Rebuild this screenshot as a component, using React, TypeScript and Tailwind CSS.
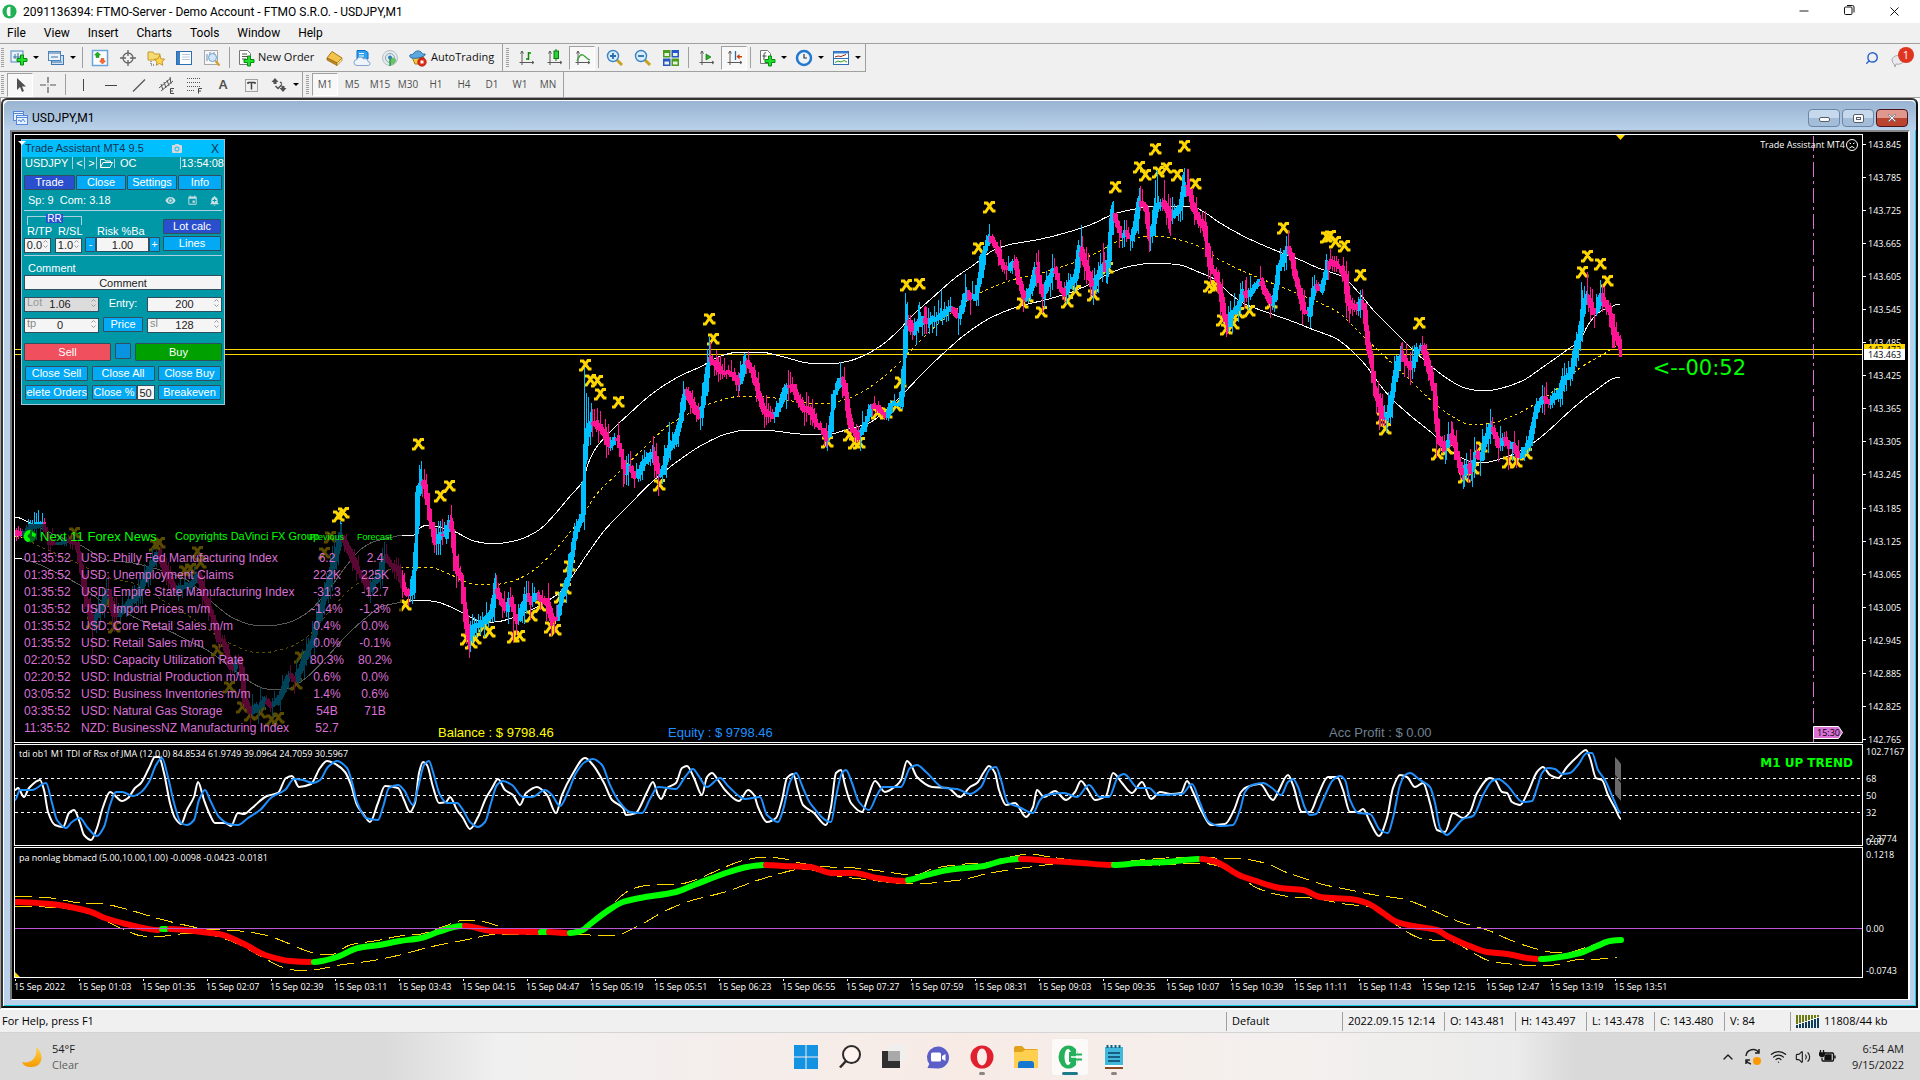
import type { ReactNode } from 'react';
import { FaXmark } from 'react-icons/fa6';
import { Search, ChevronUp, Wifi, Volume2, X, Minus } from 'lucide-react';
import { MdRemoveRedEye, MdAddAlert, MdEvent, MdPhotoCamera } from 'react-icons/md';

type Point = [number, number];

const parse = (data: string): Point[] =>
  data
    .trim()
    .split(/\s+/)
    .map((pair) => pair.split(',').map(Number) as Point);

// Price path of the main chart, one turning point per pair
const PRICE = parse(`
15,533 22,534 30,526 36,525 43,524 48,541 55,544 68,540 76,543 80,565 86,600 92,623 97,612 108,590 112,612 118,615
125,605 135,597 142,585 150,565 158,553 165,570 175,590 183,587 193,582 198,575 204,597 212,617 218,640 223,640
230,668 234,668 238,658 241,672 244,700 250,712 258,706 265,700 270,705 275,703 280,695 288,675 295,680 302,662
312,640 320,610 327,585 335,555 341,535 348,550 360,575 370,590 378,575 384,555 388,562 398,570 404,590 408,593
412,591 415,553 417,495 421,478 425,488 429,519 435,541 441,533 444,536 449,521 451,526 455,567 461,578 464,612
468,638 474,626 484,621 491,612 495,586 500,600 506,610 510,598 514,615 517,621 522,607 526,593 531,602 536,593
541,600 546,600 551,619 557,619 561,595 567,581 571,553 575,533 582,512 584,457 586,433 590,423 596,424 604,433
608,445 612,444 616,436 620,450 624,471 629,467 635,478 641,466 649,455 653,454 658,473 662,471 667,450 674,440
681,416 684,390 688,395 695,411 700,416 704,392 708,359 714,362 720,371 730,373 739,383 745,359 750,368 755,381
761,405 767,414 773,416 780,402 786,385 791,385 796,395 802,407 810,410 816,424 822,430 827,438 830,430 833,395
840,378 844,385 849,423 855,433 859,436 865,423 871,405 877,407 886,416 890,405 900,403 903,371 905,330 907,318
912,331 918,323 923,318 927,321 933,318 939,317 945,311 951,308 958,318 963,302 966,292 971,299 975,295 980,275
984,250 988,237 993,242 998,252 1002,266 1008,268 1014,260 1018,280 1024,298 1031,287 1036,265 1040,287 1042,297
1046,283 1054,268 1059,287 1065,293 1070,282 1075,277 1079,247 1084,260 1088,273 1092,287 1096,278 1102,265
1105,268 1108,260 1111,220 1113,212 1116,223 1120,235 1125,232 1130,238 1134,227 1139,200 1145,208 1149,235
1152,233 1155,207 1160,202 1165,205 1171,218 1176,210 1180,205 1183,187 1186,182 1189,193 1193,207 1198,220
1204,227 1207,253 1210,268 1216,275 1220,293 1224,317 1228,323 1231,313 1237,307 1243,290 1248,295 1253,288
1260,280 1265,293 1270,303 1274,297 1278,270 1284,253 1287,247 1291,257 1295,277 1300,297 1304,312 1308,313
1311,297 1314,285 1320,290 1324,277 1327,262 1331,262 1339,267 1345,277 1347,300 1352,307 1357,307 1361,300
1364,310 1367,343 1371,363 1374,390 1379,403 1383,418 1388,413 1392,390 1396,367 1400,353 1404,360 1412,367
1417,350 1422,347 1427,363 1433,387 1436,420 1438,440 1445,447 1450,432 1455,447 1458,463 1462,473 1467,465
1471,470 1475,453 1480,458 1484,440 1491,425 1496,440 1499,445 1504,437 1509,448 1513,443 1518,458 1524,448
1529,442 1534,417 1538,402 1543,397 1548,402 1553,397 1558,395 1563,378 1569,375 1575,350 1580,330 1583,303
1587,295 1591,307 1594,313 1597,308 1600,293 1604,303 1609,310 1612,330 1618,340 1621,355
`);

// Long wicks: x, tip
const SPIKES = parse(`
92,665 108,575 341,523 384,543 421,461 419,465 451,505 469,658 495,573 513,642 551,636 584,368 586,393 588,397
591,403 597,408 605,419 608,455 618,422 623,487 653,436 658,496 669,422 683,381 707,349 709,337 717,357 724,358
731,360 739,391 745,354 827,451 840,362 860,440 905,293 907,302 919,302 925,306 929,334 941,290 958,335 965,274
989,224 979,256 1023,312 1036,253 1042,313 1081,225 1093,305 1103,243 1107,284 1111,205 1113,201 1119,248
1130,251 1139,188 1142,189 1149,252 1155,180 1157,170 1164,180 1169,233 1183,172 1187,169 1205,211 1227,334
1229,320 1245,280 1260,266 1270,318 1280,248 1286,236 1302,325 1308,322 1343,257 1349,323 1360,290 1379,430
1384,426 1401,343 1412,378 1422,336 1436,458 1445,464 1451,421 1463,489 1471,481 1480,476 1482,429 1491,421
1508,470 1516,467 1542,385 1559,386 1581,282 1584,286 1587,272 1590,287 1600,280 1602,285 1613,348 1621,357
`);

const UPPER = parse(`
15,517 30,523 60,537 80,545 107,560 133,563 160,570 187,580 213,603 233,618 253,625 267,626 287,623 307,613 327,592
347,565 360,550 373,542 393,537 402,535 414,535 420,528 427,525 453,531 474,541 493,544 518,540 539,530 555,514
571,495 583,481 588,464 596,448 612,430 629,414 653,393 678,377 702,366 718,357 739,352 759,352 784,357 808,363
829,364 849,361 865,355 882,345 898,331 914,314 931,299 955,278 975,264 992,251 1008,245 1041,239 1065,233 1090,225
1114,214 1135,209 1155,206 1190,206 1204,212 1220,223 1245,237 1265,246 1282,253 1298,259 1318,268 1343,277 1359,293
1375,312 1400,337 1424,360 1445,377 1465,388 1484,391 1502,388 1522,381 1543,367 1567,350 1580,340 1588,325 1598,313
1608,308 1620,304
`);
const MIDDLE = parse(`
15,536 43,548 77,563 110,578 133,583 167,603 200,623 227,642 260,653 287,648 307,637 333,607 353,587 380,572 407,567
428,567 449,574 473,584 490,585 510,582 531,572 555,550 580,519 596,495 620,471 645,447 669,425 694,411 718,401 743,396
767,397 792,401 824,404 849,398 873,385 898,364 918,343 939,323 963,304 984,291 1012,280 1041,273 1073,263 1098,252
1122,240 1155,236 1180,240 1200,247 1220,260 1245,272 1269,282 1294,292 1318,302 1339,313 1359,332 1380,352 1408,378
1433,402 1453,417 1469,424 1486,424 1510,417 1535,404 1559,387 1580,368 1604,354 1618,346
`);
const LOWER = parse(`
15,558 33,562 53,571 83,587 100,600 120,610 140,620 167,630 187,640 207,650 230,667 247,680 267,689 287,689 307,677
327,657 347,635 367,617 383,606 404,602 420,600 437,602 453,608 465,614 482,622 494,622 518,616 535,608 559,593
571,578 588,553 604,531 629,505 653,481 678,461 702,445 726,434 747,430 775,431 800,434 829,434 849,429 869,423
890,407 902,395 922,374 947,350 967,333 992,317 1020,306 1045,300 1069,293 1090,284 1110,273 1131,266 1155,263
1180,265 1196,271 1216,280 1229,293 1245,304 1269,313 1294,322 1314,330 1335,338 1351,350 1367,367 1380,385 1392,399
1412,417 1433,434 1449,450 1469,461 1482,463 1506,457 1526,448 1547,432 1571,410 1592,393 1620,377
`);

const MARKS = parse(`
74,533 155,545 159,543 197,552 200,563 184,571 190,569 107,603 92,622 114,627 217,650 229,687 242,707 250,715 260,713
271,720 278,718 296,684 300,657 330,537 324,553 338,516 343,513 405,605 418,444 440,496 449,486 466,639 471,643
475,639 484,626 489,632 513,637 519,636 531,616 540,606 550,627 555,630 560,597 565,589 569,566 585,365 590,380
597,381 600,394 618,402 659,485 709,319 713,339 827,442 849,435 854,443 859,443 877,413 886,413 896,406 900,382
906,285 919,284 978,248 989,207 1022,303 1027,297 1041,312 1067,302 1075,291 1093,295 1107,268 1115,187 1139,167
1145,175 1155,149 1158,172 1166,168 1177,175 1184,146 1195,184 1209,286 1214,287 1222,320 1226,329 1233,324
1238,313 1249,311 1271,303 1283,228 1326,237 1330,236 1335,242 1344,246 1360,275 1382,418 1385,429 1419,323
1437,454 1447,449 1464,477 1473,469 1481,447 1508,462 1516,462 1526,454 1582,272 1587,256 1600,264 1607,281
`);

const TDI_FAST = parse(`
15,790 18,788 24,797 29,788 40,780 44,790 48,812 55,825 63,827 69,813 74,810 80,823 84,835 91,840 97,828 103,807
110,792 122,801 128,798 135,788 141,783 149,768 155,757 159,757 164,773 170,803 175,818 181,824 187,810 194,797
198,782 204,800 210,815 215,823 225,823 231,826 238,813 244,814 252,808 267,796 278,793 286,778 292,776 299,787
311,784 320,768 327,761 337,765 345,772 351,785 357,805 364,815 370,822 378,803 385,786 398,788 404,800 410,812
415,803 419,773 423,762 427,765 433,787 439,803 446,802 450,797 457,810 463,818 470,829 478,817 486,798 492,788
498,779 505,790 513,795 520,805 526,793 537,787 547,795 556,813 562,795 572,775 585,758 593,765 604,783 612,800
623,808 626,815 636,813 640,807 647,792 653,782 658,795 661,799 667,788 676,783 682,768 687,766 694,778 702,795
707,777 712,773 718,780 725,790 739,801 748,790 754,795 758,807 767,822 776,818 782,800 787,778 793,774 798,790
803,805 814,813 826,825 831,807 836,773 841,770 845,785 851,803 862,812 868,797 875,781 885,792 897,785 901,780
907,761 911,765 917,777 932,787 948,788 960,797 970,787 977,783 984,772 989,766 995,773 999,790 1006,805 1015,803
1026,817 1033,807 1037,790 1044,797 1055,791 1066,800 1075,792 1081,781 1088,790 1095,800 1106,796 1113,773
1122,783 1132,793 1142,782 1151,799 1160,792 1171,794 1181,793 1187,781 1193,792 1202,812 1211,825 1225,824
1234,810 1241,792 1247,787 1260,784 1273,800 1278,792 1288,775 1293,785 1302,812 1310,812 1318,795 1328,777
1337,777 1343,790 1350,812 1358,812 1363,809 1370,822 1379,836 1387,818 1393,788 1400,775 1407,777 1415,787
1423,783 1430,803 1437,830 1445,832 1453,813 1463,818 1470,812 1477,793 1490,778 1495,780 1502,792 1507,793
1512,802 1520,805 1528,792 1537,772 1543,767 1550,775 1558,778 1567,767 1577,757 1586,750 1590,758 1596,778
1602,780 1608,795 1615,808 1621,819
`);
const TDI_SLOW = parse(`
15,800 20,790 32,790 46,783 52,803 57,820 66,828 72,822 80,818 87,827 97,836 104,827 110,805 116,792 122,792 133,796
140,793 149,782 156,765 162,758 168,777 174,803 181,823 187,825 194,820 199,800 205,790 210,800 219,817 229,824
238,825 248,818 260,810 272,797 285,790 294,779 303,780 313,783 320,780 328,767 337,761 347,768 352,782 357,802
366,818 378,820 383,807 389,788 398,785 404,790 413,805 418,788 424,765 429,761 433,772 440,795 447,803 457,803
463,810 470,822 478,827 485,822 491,803 497,785 503,781 512,785 523,797 532,797 545,790 552,795 560,806 568,792
576,773 585,762 593,759 602,765 610,785 618,800 630,812 642,813 650,799 658,787 676,789 685,777 693,769 698,775
707,787 720,778 729,787 745,799 760,797 767,815 778,822 783,810 790,782 796,773 803,788 810,803 831,822 836,797
842,773 846,770 852,783 859,802 869,810 877,795 883,787 901,787 910,768 917,765 926,772 944,788 957,789 970,794
981,787 990,769 996,767 1001,780 1008,803 1019,807 1033,813 1040,800 1046,795 1064,793 1077,797 1089,785 1100,797
1109,797 1118,777 1124,774 1138,788 1149,788 1158,795 1182,794 1192,784 1200,803 1209,822 1220,826 1233,825
1240,810 1245,792 1252,785 1263,783 1272,788 1281,795 1288,782 1293,779 1298,787 1305,808 1310,815 1316,814
1323,800 1333,780 1340,776 1345,780 1350,800 1358,813 1370,814 1380,830 1388,833 1393,818 1400,785 1405,775
1410,773 1420,780 1430,787 1435,803 1440,828 1447,835 1453,830 1463,819 1473,816 1483,795 1492,781 1498,779
1507,785 1523,802 1532,801 1537,788 1542,773 1548,768 1555,769 1562,774 1570,773 1578,765 1587,753 1592,753
1598,770 1605,780 1613,798 1621,813
`);

const MACD: { up: boolean; data: string }[] = [
  { up: false, data: '15,902 51,904 88,911 105,918 126,924 143,928 158,930' },
  { up: true, data: '162,929 166,929' },
  { up: false, data: '170,929 202,932 219,934 244,944 265,955 290,961 310,962' },
  { up: true, data: '314,962 322,961 337,957 358,948 379,945 400,941 421,938 438,932 461,926' },
  { up: false, data: '465,926 492,931 537,932' },
  { up: true, data: '541,932 546,932' },
  { up: false, data: '549,932 566,933' },
  { up: true, data: '570,933 583,930 589,925 606,912 623,902 640,898 676,892 694,885 729,872 747,867 763,865' },
  { up: false, data: '766,865 783,866 810,867 832,873 854,873 877,878 904,881' },
  { up: true, data: '908,880 926,875 948,870 984,866 1002,861 1018,859' },
  { up: false, data: '1021,859 1051,861 1082,863 1110,865' },
  { up: true, data: '1114,865 1140,863 1167,862 1198,859' },
  {
    up: false,
    data: '1202,859 1216,862 1241,876 1253,880 1280,888 1303,890 1320,897 1333,898 1350,899 1367,903 1383,913 1397,922 1413,926 1437,930 1447,936 1467,945 1487,952 1507,954 1527,958 1537,959',
  },
  { up: true, data: '1541,959 1553,958 1580,953 1597,946 1610,941 1621,940' },
];
const MACD_UPPER = parse(`
15,896 51,898 80,903 103,904 126,909 143,914 160,919 180,924 206,929 240,931 265,935 290,944 310,952 330,955 350,945
380,940 400,936 421,934 445,926 465,920 485,922 505,928 540,932 570,932 590,924 606,912 620,897 632,889 650,885
680,884 700,878 725,867 745,860 765,857 785,859 800,863 830,867 855,868 880,871 915,875 935,868 965,864 990,862
1010,857 1030,854 1050,857 1080,861 1110,863 1140,860 1190,857 1215,858 1243,859 1268,864 1283,871 1303,878
1325,885 1350,890 1375,895 1403,899 1423,906 1443,915 1460,922 1490,931 1510,940 1530,947 1550,952 1565,953
1590,946 1608,940 1621,938
`);
const MACD_LOWER = parse(`
15,906 60,908 90,914 110,923 125,930 143,936 165,936 190,933 215,936 240,945 262,957 285,968 303,971 320,969 340,965
370,961 400,955 430,947 465,940 500,934 540,934 590,935 615,935 640,925 665,911 690,901 725,892 765,878 805,869
830,875 870,880 910,884 960,880 990,873 1030,867 1070,863 1110,866 1160,865 1200,863 1235,872 1255,887 1275,894
1293,897 1310,898 1345,904 1370,907 1390,920 1405,931 1423,939 1453,942 1470,951 1490,961 1510,964 1543,966
1560,964 1575,960 1600,959 1617,957
`);

// Cubic through every point, flat at the turning points so that no peak overshoots
function curve(points: Point[]) {
  const slopes = points.map((p, i) => {
    if (i === 0 || i === points.length - 1) return 0;
    const a = (p[1] - points[i - 1][1]) / (p[0] - points[i - 1][0]);
    const b = (points[i + 1][1] - p[1]) / (points[i + 1][0] - p[0]);
    return a * b <= 0 ? 0 : (2 * a * b) / (a + b);
  });
  let d = `M${points[0][0]} ${points[0][1]}`;
  for (let i = 1; i < points.length; i++) {
    const [x0, y0] = points[i - 1];
    const [x1, y1] = points[i];
    const h = (x1 - x0) / 3;
    d += `C${(x0 + h).toFixed(1)} ${(y0 + slopes[i - 1] * h).toFixed(1)} ${(x1 - h).toFixed(1)} ${(y1 - slopes[i] * h).toFixed(1)} ${x1} ${y1}`;
  }
  return d;
}

function valueAt(points: Point[], x: number) {
  const i = points.findIndex((p) => p[0] >= x);
  if (i <= 0) return points[i === 0 ? 0 : points.length - 1][1];
  const [x0, y0] = points[i - 1];
  const [x1, y1] = points[i];
  return y0 + ((y1 - y0) * (x - x0)) / (x1 - x0);
}

const noise = (n: number) => {
  const v = Math.sin(n * 12.9898) * 43758.5453;
  return v - Math.floor(v);
};

function buildCandles() {
  const out = { upBody: '', upWick: '', downBody: '', downWick: '' };
  for (let x = 16; x <= 1621; x += 2) {
    const before = valueAt(PRICE, x - 2);
    const after = valueAt(PRICE, x + 1);
    const up = valueAt(PRICE, x + 1) < valueAt(PRICE, x - 1);
    const top = Math.round(Math.min(before, after) - noise(x) * 3);
    const bottom = Math.round(Math.max(before, after) + 1 + noise(x + 7) * 3);
    const high = Math.round(top - Math.pow(noise(x + 3), 2) * 15);
    const low = Math.round(bottom + Math.pow(noise(x + 5), 2) * 15);
    const body = `M${x + 0.5} ${top}V${bottom}`;
    const wick = `M${x + 0.5} ${high}V${low}`;
    if (up) {
      out.upBody += body;
      out.upWick += wick;
    } else {
      out.downBody += body;
      out.downWick += wick;
    }
  }
  SPIKES.forEach(([x, tip]) => {
    const wick = `M${x + 0.5} ${tip}V${Math.round(valueAt(PRICE, x))}`;
    if (valueAt(PRICE, x + 2) < valueAt(PRICE, x - 2) || tip < valueAt(PRICE, x) - 25) out.upWick += wick;
    else out.downWick += wick;
  });
  return out;
}

const candles = buildCandles();

const PRICES = Array.from({ length: 19 }, (_, i) => (143.845 - i * 0.06).toFixed(3));
const TIMES = [
  '2022', '01:03', '01:35', '02:07', '02:39', '03:11', '03:43', '04:15', '04:47', '05:19', '05:51', '06:23', '06:55',
  '07:27', '07:59', '08:31', '09:03', '09:35', '10:07', '10:39', '11:11', '11:43', '12:15', '12:47', '13:19', '13:51',
];

const NEWS = [
  ['01:35:52', 'USD: Philly Fed Manufacturing Index', '6.2', '2.4'],
  ['01:35:52', 'USD: Unemployment Claims', '222K', '225K'],
  ['01:35:52', 'USD: Empire State Manufacturing Index', '-31.3', '-12.7'],
  ['01:35:52', 'USD: Import Prices m/m', '-1.4%', '-1.3%'],
  ['01:35:52', 'USD: Core Retail Sales m/m', '0.4%', '0.0%'],
  ['01:35:52', 'USD: Retail Sales m/m', '0.0%', '-0.1%'],
  ['02:20:52', 'USD: Capacity Utilization Rate', '80.3%', '80.2%'],
  ['02:20:52', 'USD: Industrial Production m/m', '0.6%', '0.0%'],
  ['03:05:52', 'USD: Business Inventories m/m', '1.4%', '0.6%'],
  ['03:35:52', 'USD: Natural Gas Storage', '54B', '71B'],
  ['11:35:52', 'NZD: BusinessNZ Manufacturing Index', '52.7', ''],
];

/* ---------- toolbar ---------- */

type IconProps = { children: ReactNode; size?: number };

function Icon({ children, size = 18 }: IconProps) {
  return (
    <svg width={size} height={size} viewBox="0 0 18 18" fill="none" className="shrink-0">
      {children}
    </svg>
  );
}

function Plus({ x = 10, y = 10 }: { x?: number; y?: number }) {
  return (
    <path
      d={`M${x - 1.5} ${y - 5}h3v3.500h3.500v3h-3.500v3.500h-3v-3.500h-3.500v-3h3.500z`}
      fill="#1fe02a"
      stroke="#0a8a10"
      strokeWidth="1"
    />
  );
}

function Tool({ label, pressed, children }: { label: string; pressed?: boolean; children: ReactNode }) {
  return (
    <button aria-label={label} className="flex w-7 items-center justify-center">
      <span
        className={
          pressed
            ? 'flex h-6 w-[26px] items-center justify-center border border-t-[#a0a0a0] border-l-[#a0a0a0] border-r-white border-b-white bg-[#f8f8f8]'
            : 'flex h-6 w-[26px] items-center justify-center'
        }
      >
        {children}
      </span>
    </button>
  );
}

function SplitTool({ label, children }: { label: string; children: ReactNode }) {
  return (
    <button aria-label={label} className="flex w-[37px] items-center">
      <span className="flex w-7 justify-center">{children}</span>
      <span className="h-0 w-0 border-x-[3px] border-t-[3px] border-x-transparent border-t-black" />
    </button>
  );
}

const Separator = () => (
  <div className="flex w-[7px] justify-center">
    <div className="h-[21px] w-px self-center bg-[#a0a0a0]" />
  </div>
);
const NarrowSeparator = () => (
  <div className="flex w-[5px] justify-center">
    <div className="h-[21px] w-px self-center bg-[#a0a0a0]" />
  </div>
);
const Grip = () => (
  <div className="mx-px h-5 w-[3px] self-center bg-[repeating-linear-gradient(to_bottom,#a0a0a0_0_1px,#f0f0f0_1px_2px)]" />
);

const axes = <path d="M5 2v14M2.5 13.5H17M3.5 4.5L5 2l1.5 2.5M15 12l2 1.5-2 1.5" stroke="#5a5a5a" />;

function MainToolbar() {
  return (
    <div className="flex h-7 w-[866px] items-stretch border-r border-b border-[#a0a0a0] text-[#111]">
      <Grip />
      <SplitTool label="New chart">
        <Icon>
          <rect x="1" y="2" width="12" height="11" fill="#eaf3fc" stroke="#4d86bd" />
          <path d="M3 8h7M5 5v5M8 4v6" stroke="#3c6ea0" />
          <Plus x={12} y={11} />
        </Icon>
      </SplitTool>
      <SplitTool label="Profiles">
        <Icon>
          <rect x="4.5" y="6.5" width="12" height="9" fill="#cfe2f5" stroke="#3f78b2" />
          <rect x="1.5" y="2.5" width="12" height="9" fill="#eaf3fc" stroke="#4d86bd" />
          <path d="M1.5 4h12M4 8h7M5 13h10" stroke="#3c6ea0" />
        </Icon>
      </SplitTool>
      <Separator />
      <Tool label="Market watch">
        <Icon>
          <rect x="1.5" y="1.5" width="15" height="15" fill="#fff" stroke="#6aa5dd" strokeWidth="1.5" />
          <path d="M6.5 3l3 3h-1.500v2.500h-3V6h-1.500z" fill="#1db31d" stroke="#0d7d0d" strokeWidth=".5" />
          <path d="M11.500 15l-3-3h1.500V9.500h3V12h1.500z" fill="#ff6a30" stroke="#c23a08" strokeWidth=".5" />
        </Icon>
      </Tool>
      <Tool label="Data window">
        <Icon>
          <circle cx="9" cy="9" r="5" stroke="#666" strokeWidth="1.3" />
          <path d="M9 1v6M9 11v6M1 9h6M11 9h6" stroke="#666" strokeWidth="1.300" />
        </Icon>
      </Tool>
      <Tool label="Navigator">
        <Icon>
          <path d="M1 3h5l1.500 2H13v6H1z" fill="#f6dc70" stroke="#c0982e" />
          <path d="M4 12v4h4" stroke="#444" strokeDasharray="1 1" />
          <path d="M12.500 6.500l1.600 3.300 3.600.4-2.700 2.500.8 3.600-3.300-1.900-3.200 1.900.7-3.600-2.600-2.500 3.600-.4z" fill="#ffd84a" stroke="#b8821a" strokeWidth=".8" />
        </Icon>
      </Tool>
      <Tool label="Terminal">
        <Icon>
          <rect x="1.500" y="2.500" width="15" height="13" fill="#fff" stroke="#2c6eb5" />
          <path d="M2 3h3v12H2z" fill="#3f7fc4" />
          <path d="M7 5.500h8M7 8h8M7 10.500h8" stroke="#b8c8dc" />
        </Icon>
      </Tool>
      <Tool label="Strategy tester">
        <Icon>
          <rect x="1.500" y="1.500" width="13" height="14" fill="#f6f6f6" stroke="#a8a8a8" />
          <path d="M4 12V5M7 8V3M11 6V3" stroke="#6d8fb4" />
          <circle cx="9.500" cy="8.500" r="4" fill="#cfe6fa" stroke="#6f9fce" />
          <path d="M12.500 12l4 4.500" stroke="#d49c2a" strokeWidth="2.200" />
        </Icon>
      </Tool>
      <Separator />
      <button className="flex w-[87px] items-center">
        <span className="flex w-[25px] justify-center">
          <Icon>
            <path d="M2.500 1.500h8l3 3v11h-11z" fill="#fff" stroke="#777" />
            <path d="M5 5h5M5 7.500h6M5 10h4" stroke="#555" />
            <Plus x={12} y={12} />
          </Icon>
        </span>
        <span className="whitespace-nowrap">New Order</span>
      </button>
      <Tool label="MetaEditor">
        <Icon>
          <path d="M2 9l5-6.500 10 6.500-5 5z" fill="#f3c44c" stroke="#a97614" />
          <path d="M2 9l10 5v2.500L2 11z" fill="#c98d1b" stroke="#8d5f0c" strokeWidth=".7" />
          <path d="M12 14l5-5v2.500l-5 5z" fill="#ffe9a0" stroke="#a97614" strokeWidth=".7" />
        </Icon>
      </Tool>
      <Tool label="Virtual hosting">
        <Icon>
          <path d="M4 1.500h8l3 2V10H4z" fill="#2fa3f2" stroke="#0d6bbd" />
          <path d="M6 4.500h5M6 7h5" stroke="#fff" />
          <path d="M4 16.500a3 3 0 010-6 3.500 3.500 0 016.500-.5 3 3 0 014.500 2.500 2 2 0 010 4z" fill="#eef4fb" stroke="#86a6cb" />
        </Icon>
      </Tool>
      <Tool label="Signals">
        <Icon>
          <circle cx="9" cy="9" r="7.500" fill="#e4ebee" stroke="#b4bfc6" />
          <circle cx="9" cy="9" r="4.500" stroke="#8aa4b4" />
          <path d="M9 9c3-1 5 0 6.500 2-1 3-3 5-6.500 5.500z" fill="#6cc070" />
          <circle cx="9" cy="8.500" r="2" fill="#2f7fb7" />
          <path d="M9 9v8" stroke="#2d9a3a" strokeWidth="1.500" />
        </Icon>
      </Tool>
      <button className="flex w-[97px] items-center">
        <span className="flex w-[27px] justify-center">
          <Icon>
            <path d="M3 8h12l-3 7H6z" fill="#f1c842" stroke="#a67c10" />
            <path d="M1 6c2-1 3 0 4-2s5-3 7-1 1 2 4 2c1 0 0 3-7 4S0 8 1 6z" fill="#5ba9de" stroke="#2a6da5" />
            <circle cx="13" cy="13" r="4.300" fill="#dd2a1b" stroke="#a81206" strokeWidth=".6" />
            <path d="M11.500 11.500h3v3h-3z" fill="#fff" />
          </Icon>
        </span>
        <span>AutoTrading</span>
      </button>
      <div className="mx-px w-px bg-[#a0a0a0]" />
      <div className="flex pr-[2px] pl-px">
        <Grip />
      </div>
      <Tool label="Bar chart">
        <Icon>
          {axes}
          <path d="M11.500 3v8M11.500 4H14M11.500 10H9" stroke="#0d8a0d" strokeWidth="1.500" />
        </Icon>
      </Tool>
      <Tool label="Candlesticks">
        <Icon>
          {axes}
          <path d="M11 0v12" stroke="#0b7a0b" />
          <rect x="9" y="2" width="4.500" height="7.500" fill="#25d23c" stroke="#0b7a0b" />
        </Icon>
      </Tool>
      <Tool label="Line chart" pressed>
        <Icon>
          {axes}
          <path d="M4 12c2-5 4-7 6-6s4 4 7 5" stroke="#38a038" strokeWidth="1.300" />
        </Icon>
      </Tool>
      <NarrowSeparator />
      <Tool label="Zoom in">
        <Icon>
          <path d="M11 11l5 5" stroke="#c9a21a" strokeWidth="3" />
          <circle cx="7" cy="7" r="5.500" fill="#d7edfb" stroke="#3b82c4" strokeWidth="1.400" />
          <path d="M4 7h6M7 4v6" stroke="#2e6ea8" strokeWidth="1.800" />
        </Icon>
      </Tool>
      <Tool label="Zoom out">
        <Icon>
          <path d="M11 11l5 5" stroke="#c9a21a" strokeWidth="3" />
          <circle cx="7" cy="7" r="5.500" fill="#d7edfb" stroke="#3b82c4" strokeWidth="1.400" />
          <path d="M4 7h6" stroke="#2e6ea8" strokeWidth="1.800" />
        </Icon>
      </Tool>
      <Tool label="Tile windows">
        <Icon>
          <path d="M1 1h7.500v7.500H1zM9.500 9.500H17V17H9.500z" fill="#4b9b1c" />
          <path d="M9.500 1H17v7.500H9.500zM1 9.500h7.500V17H1z" fill="#2456c8" />
          <path d="M2.500 4h4.500v3H2.500zM11 4h4.500v3H11zM2.500 12.500h4.500v3H2.500zM11 12.500h4.500v3H11z" fill="#e9f2e4" />
        </Icon>
      </Tool>
      <Separator />
      <Tool label="Auto scroll">
        <Icon>
          {axes}
          <path d="M9 5l5 3-5 3z" fill="#2bb02b" stroke="#0b7a0b" strokeWidth=".7" />
        </Icon>
      </Tool>
      <Tool label="Chart shift" pressed>
        <Icon>
          {axes}
          <path d="M10.500 2v9" stroke="#2a6da5" strokeWidth="1.300" />
          <path d="M11.500 7.500l3-2.500v2H17v1.500h-2.500v2z" fill="#c8400e" />
        </Icon>
      </Tool>
      <NarrowSeparator />
      <SplitTool label="Indicators">
        <Icon>
          <path d="M2.500 1.500h7l3 3v10h-10z" fill="#fff" stroke="#777" />
          <path d="M8 4c-2-1-2 1-2 3v4M4.500 7h4" stroke="#444" />
          <Plus x={12} y={12} />
        </Icon>
      </SplitTool>
      <SplitTool label="Periods">
        <Icon>
          <circle cx="9" cy="9" r="7" fill="#eef3f8" stroke="#2277cf" strokeWidth="2.500" />
          <path d="M9 5v4h3" stroke="#333" strokeWidth="1.200" />
        </Icon>
      </SplitTool>
      <SplitTool label="Templates">
        <Icon>
          <rect x="1.500" y="2.500" width="15" height="13" fill="#fff" stroke="#2f6db5" />
          <path d="M2 3.500h14" stroke="#3d80cf" strokeWidth="2" />
          <path d="M3 8l3-1 3 .5 5-2" stroke="#9c2b12" />
          <path d="M2 9.500h14" stroke="#2f6db5" />
          <path d="M3 13.500l3-1.500 3 1 3-1.500 3 1.500" stroke="#2a9a2a" />
        </Icon>
      </SplitTool>
    </div>
  );
}

const FRAMES = ['M5', 'M15', 'M30', 'H1', 'H4', 'D1', 'W1', 'MN'];

function LineToolbar() {
  return (
    <div className="flex h-[25px] w-[564px] items-stretch border-r border-[#a0a0a0] text-[#4f4f4f]">
      <div className="flex pr-px">
        <Grip />
      </div>
      <Tool label="Cursor" pressed>
        <Icon>
          <path d="M6 2v12l3-3 2 5 2-1-2-4.500h4z" fill="#505050" />
        </Icon>
      </Tool>
      <Tool label="Crosshair">
        <Icon>
          <path d="M9 1v6M9 11v6M1 9h6M11 9h6M8.500 9h1" stroke="#555" strokeWidth="1.200" />
        </Icon>
      </Tool>
      <Separator />
      <Tool label="Vertical line">
        <Icon>
          <path d="M9.500 3v12" stroke="#444" />
        </Icon>
      </Tool>
      <Tool label="Horizontal line">
        <Icon>
          <path d="M3 9.500h12" stroke="#444" />
        </Icon>
      </Tool>
      <Tool label="Trendline">
        <Icon>
          <path d="M3 15.500L15 3.500" stroke="#555" strokeWidth="1.200" />
        </Icon>
      </Tool>
      <Tool label="Equidistant channel">
        <Icon>
          <path d="M1 12L13 2M3 15L15 5M3 8l2 6M6 6l2 6M9 4l2 6M12 1l1 7" stroke="#555" />
          <path d="M16 12.500h-3.500v5H16M12.500 15H15" stroke="#444" />
        </Icon>
      </Tool>
      <Tool label="Fibonacci">
        <Icon>
          <path d="M1 2.500h14M1 6.500h14M1 10.500h14M1 14.500h8" stroke="#555" strokeDasharray="1 1" />
          <path d="M16 12.500h-3.500v5M12.500 15H15" stroke="#444" />
        </Icon>
      </Tool>
      <button className="w-7 font-['Noto_Sans'] text-[13px] font-semibold">A</button>
      <Tool label="Text label">
        <Icon>
          <rect x="3.500" y="3.500" width="12" height="12" stroke="#555" strokeDasharray="1 1" />
          <path d="M6 6.500h7M9.500 6.500v7M6 6v2M13 6v2" stroke="#444" strokeWidth="1.500" />
        </Icon>
      </Tool>
      <SplitTool label="Arrows">
        <Icon>
          <path d="M5 2l3.500 4H6.500v2h-3V6h-2zM13 16l-3.500-4h2v-2h3v2h2z" fill="#505050" />
          <path d="M10 6l2 1.500M5.500 10l2.500 2.500L12 8.500" stroke="#505050" strokeWidth="1.500" />
        </Icon>
      </SplitTool>
      <div className="w-px bg-[#a0a0a0]" />
      <div className="flex pr-[2px] pl-[2px]">
        <Grip />
      </div>
      <div className="flex text-[10px]">
        <button className="my-px w-[26px] border border-t-[#a0a0a0] border-r-white border-b-white border-l-[#a0a0a0] bg-[#f8f8f8]">
          M1
        </button>
        {FRAMES.map((frame) => (
          <button key={frame} className="w-7">
            {frame}
          </button>
        ))}
      </div>
    </div>
  );
}

function FtmoLogo({ size }: { size: number }) {
  return (
    <svg width={size} height={size} viewBox="0 0 16 16">
      <circle cx="8" cy="8" r="7.500" fill="#1fb155" />
      <ellipse cx="8" cy="8" rx="3" ry="5" fill="#fff" />
      <path d="M9 3c2 1 3 3 3 5s-1 4-3 5z" fill="#1fb155" />
    </svg>
  );
}

function TitleBar() {
  return (
    <header className="flex h-[23px] shrink-0 items-center bg-white pr-[2px]">
      <div className="mr-[6px] ml-[2px]">
        <FtmoLogo size={15} />
      </div>
      <h1 className="flex-1 font-['Roboto',sans-serif] text-xs leading-4">
        2091136394: FTMO-Server - Demo Account - FTMO S.R.O. - USDJPY,M1
      </h1>
      <div className="flex">
        <button aria-label="Minimize" className="flex w-[45px] justify-center">
          <Minus size={14} strokeWidth={1.5} />
        </button>
        <button aria-label="Restore" className="flex w-[45px] justify-center">
          <svg width="12" height="12" viewBox="0 0 12 12" fill="none" stroke="#111">
            <rect x="1.500" y="3" width="7.500" height="7.500" rx="1" />
            <path d="M4 1.500h5.500a1.500 1.500 0 011.500 1.500v5.500" />
          </svg>
        </button>
        <button aria-label="Close" className="flex w-[47px] justify-center">
          <X size={15} strokeWidth={1.5} />
        </button>
      </div>
    </header>
  );
}

function MenuBar() {
  return (
    <nav className="flex h-[21px] shrink-0 items-center gap-[18px] border-b border-[#a0a0a0] pl-[7px] font-['Roboto',sans-serif] text-xs leading-4">
      {['File', 'View', 'Insert', 'Charts', 'Tools', 'Window', 'Help'].map((item) => (
        <button key={item}>{item}</button>
      ))}
    </nav>
  );
}

/* ---------- trade assistant ---------- */

const btn = 'overflow-hidden whitespace-nowrap rounded-[1px] border border-[#2f4f5f] text-center leading-[13px] ';
const field = 'min-w-0 border border-[#2f4f5f] text-center text-[#222] leading-[13px] ';

function Spin() {
  return (
    <svg width="5" height="8" viewBox="0 0 5 8" fill="none" stroke="#999" className="pointer-events-none absolute top-[3px] right-[3px]">
      <path d="M.5 2.500l2-2 2 2M.5 5.500l2 2 2-2" />
    </svg>
  );
}

function Divider() {
  return <div className="mx-[2px] h-px bg-[#a9cfe0]" />;
}

function TradeAssistant() {
  return (
    <section className="absolute top-[4px] left-[6px] flex h-[266px] w-[204px] flex-col border border-[#9cc9dd] bg-[#0097a7] font-['Liberation_Sans',sans-serif] text-[11px] text-white">
      <div className="flex h-[17px] shrink-0 items-center bg-[#00bfff] pl-[3px] text-[#15334f]">
        <span className="flex-1">Trade Assistant MT4 9.5</span>
        <MdPhotoCamera size={12} className="mr-7 text-[#d8d8d8]" />
        <button className="mr-[6px] w-[7px] text-[12px]">X</button>
      </div>
      <div className="flex h-[12px] shrink-0 items-center gap-[2px] leading-[12px]">
        <select aria-label="Symbol" className="h-3 w-[51px] appearance-none border-r border-[#a9cfe0] pl-[3px]">
          <option>USDJPY</option>
        </select>
        <button className="w-[10px] border-r border-[#a9cfe0]">&lt;</button>
        <button className="w-[10px] border-r border-[#a9cfe0]">&gt;</button>
        <button aria-label="Open" className="flex w-[16px] justify-center border-r border-[#a9cfe0]">
          <svg width="13" height="9" viewBox="0 0 13 9" fill="none" stroke="#fff">
            <path d="M.5 8.500v-8h4l1 1.500h5v1.500M.5 8.500l2.500-5h9.500l-2.500 5z" />
          </svg>
        </button>
        <span className="flex-1 pl-[3px]">OC</span>
        <span className="border-l border-[#a9cfe0]">13:54:08</span>
      </div>
      <div className="mt-[6px] flex gap-[1px] px-[2px]">
        <button className={btn + 'h-[15px] w-[51px] bg-[#2a4fce]'}>Trade</button>
        <button className={btn + 'h-[15px] w-[50px] bg-[#03a9f4]'}>Close</button>
        <button className={btn + 'h-[15px] w-[50px] bg-[#03a9f4]'}>Settings</button>
        <button className={btn + 'h-[15px] w-[44px] bg-[#03a9f4]'}>Info</button>
      </div>
      <div className="flex h-[20px] shrink-0 items-center pl-[6px]">
        <span className="flex-1 whitespace-pre">Sp: 9 &nbsp;Com: 3.18</span>
        <div className="flex gap-[11px] pr-[4px] text-[#c8dfe4]">
          <MdRemoveRedEye size={11} />
          <MdEvent size={11} />
          <MdAddAlert size={11} />
        </div>
      </div>
      <Divider />
      <div className="flex h-[44px] shrink-0 pt-[5px] pl-[2px]">
        <div className="w-[61px]">
          <div className="mx-[3px] flex h-[9px] justify-center border border-b-0 border-[#a9cfe0]">
            <span className="-mt-[3px] h-[9px] w-[17px] overflow-hidden bg-[#2a4fce] text-center text-[10px] leading-[9px]">RR</span>
          </div>
          <div className="flex gap-[6px] pt-[1px] pl-[3px] leading-[11px]">
            <label htmlFor="rtp">R/TP</label>
            <label htmlFor="rsl">R/SL</label>
          </div>
          <div className="flex gap-[4px]">
            <div className="relative">
              <input id="rtp" defaultValue="0.0" className={field + 'h-[15px] w-[27px] bg-[#f5f5f5] pr-[6px]'} />
              <Spin />
            </div>
            <div className="relative">
              <input id="rsl" defaultValue="1.0" className={field + 'h-[15px] w-[27px] bg-[#f5f5f5] pr-[6px]'} />
              <Spin />
            </div>
          </div>
        </div>
        <div className="flex w-[78px] flex-col">
          <label htmlFor="risk" className="pt-[10px] pl-[12px] leading-[11px]">
            Risk %Ba
          </label>
          <div className="flex">
            <button className={btn + 'h-[15px] w-[11px] bg-[#03a9f4]'}>-</button>
            <input id="risk" defaultValue="1.00" className={field + 'h-[15px] w-[53px] bg-[#f5f5f5]'} />
            <button className={btn + 'h-[15px] w-[11px] bg-[#03a9f4]'}>+</button>
          </div>
        </div>
        <div className="flex flex-col gap-[2px]">
          <button className={btn + 'mt-[3px] h-[15px] w-[58px] bg-[#2a4fce]'}>Lot calc</button>
          <button className={btn + 'h-[15px] w-[58px] bg-[#03a9f4]'}>Lines</button>
        </div>
      </div>
      <Divider />
      <label htmlFor="comment" className="mt-[6px] pl-[6px] leading-[13px]">
        Comment
      </label>
      <input id="comment" defaultValue="Comment" className={field + 'mx-[2px] h-[15px] shrink-0 bg-[#f5f5f5]'} />
      <div className="mt-[6px] flex h-[15px] justify-between px-[2px]">
        <div className="relative">
          <label htmlFor="lot" className="absolute left-[3px] leading-[12px] text-[#999]">
            Lot
          </label>
          <input id="lot" defaultValue="1.06" className={field + 'h-[15px] w-[75px] bg-[#dcdcdc] pr-[3px]'} />
          <Spin />
        </div>
        <label htmlFor="entry" className="leading-[15px]">
          Entry:
        </label>
        <div className="relative">
          <input id="entry" defaultValue="200" className={field + 'h-[15px] w-[75px] bg-[#f5f5f5]'} />
          <Spin />
        </div>
      </div>
      <div className="mt-[6px] flex h-[15px] justify-between px-[2px]">
        <div className="relative">
          <label htmlFor="tp" className="absolute left-[3px] leading-[12px] text-[#888]">
            tp
          </label>
          <input id="tp" defaultValue="0" className={field + 'h-[15px] w-[75px] bg-[#f5f5f5] pr-[3px]'} />
          <Spin />
        </div>
        <button className={btn + 'h-[15px] w-[40px] bg-[#03a9f4]'}>Price</button>
        <div className="relative">
          <label htmlFor="sl" className="absolute left-[3px] leading-[12px] text-[#888]">
            sl
          </label>
          <input id="sl" defaultValue="128" className={field + 'h-[15px] w-[75px] bg-[#f5f5f5]'} />
          <Spin />
        </div>
      </div>
      <div className="mt-[11px] flex justify-between px-[2px]">
        <button className={btn + 'h-[18px] w-[87px] bg-[#f04f5e]'}>Sell</button>
        <button aria-label="Pending order" className={btn + 'h-4 w-4 bg-[#0a93e0]'} />
        <button className={btn + 'h-[18px] w-[87px] bg-[#00a000]'}>Buy</button>
      </div>
      <div className="mt-[5px] flex justify-between px-[3px]">
        <button className={btn + 'h-[15px] w-[63px] bg-[#03a9f4]'}>Close Sell</button>
        <button className={btn + 'h-[15px] w-[63px] bg-[#03a9f4]'}>Close All</button>
        <button className={btn + 'h-[15px] w-[63px] bg-[#03a9f4]'}>Close Buy</button>
      </div>
      <div className="mt-[4px] flex justify-between px-[3px]">
        <button className={btn + 'flex h-[15px] w-[63px] justify-end bg-[#03a9f4]'}>Delete Orders</button>
        <div className="flex w-[63px]">
          <button className={btn + 'h-[15px] w-[45px] bg-[#03a9f4]'}>Close %</button>
          <input aria-label="Close percent" defaultValue="50" className={field + 'h-[15px] w-[18px] bg-[#f5f5f5]'} />
        </div>
        <button className={btn + 'h-[15px] w-[63px] bg-[#03a9f4]'}>Breakeven</button>
      </div>
    </section>
  );
}

/* ---------- charts ---------- */

function NewsPanel() {
  return (
    <section className="absolute bottom-[6px] left-[7px] w-[380px] bg-black/65 font-['Liberation_Sans',sans-serif] text-xs text-[#da70d6]">
      <div className="flex h-[25px] items-center whitespace-nowrap text-[#00ff00]">
        <svg width="15" height="15" viewBox="0 0 15 15" className="ml-[1px]">
          <circle cx="7" cy="7" r="6.500" fill="#006b18" />
          <path d="M1 6c1-4 4-5 7-5-2 2 0 3-2 4S4 8 6 9s1 4-1 4C2 12 0 9 1 6zM9 3l4 2-1 3-3-1z" fill="#00ff00" />
        </svg>
        <h2 className="ml-[2px] w-[135px] text-[13px]">Next 11 Forex News</h2>
        <span className="w-[134px] text-[11px]">Copyrights DaVinci FX Group</span>
        <span className="w-[48px] text-[9px]">Previous</span>
        <span className="text-[9px]">Forecast</span>
      </div>
      <table className="w-full table-fixed">
        <tbody>
          {NEWS.map(([time, event, previous, forecast]) => (
            <tr key={event} className="h-[17px]">
              <td className="w-[59px] pl-[2px] leading-4">{time}</td>
              <td className="w-[222px] leading-4 whitespace-nowrap">{event}</td>
              <td className="w-[48px] text-center leading-4">{previous}</td>
              <td className="w-[48px] text-center leading-4">{forecast}</td>
              <td />
            </tr>
          ))}
        </tbody>
      </table>
    </section>
  );
}

const axisText = 'text-[9px] leading-[11px] text-white ';

function Tick({ children }: { children: ReactNode }) {
  return (
    <li className="flex items-center gap-[2px]">
      <span className="h-px w-[3px] bg-white" />
      <span>{children}</span>
    </li>
  );
}

function PricePane() {
  return (
    <div className="flex min-h-0 flex-1">
      <div className="relative min-w-0 flex-1 border border-white">
        <svg viewBox="15 135 1847 607" preserveAspectRatio="none" className="absolute inset-0 h-full w-full" fill="none">
          <g shapeRendering="crispEdges">
            <path d="M15 349.500H1862M15 354.500H1862" stroke="#ffd700" />
            <path d={curve(UPPER)} stroke="#fff" />
            <path d={curve(LOWER)} stroke="#fff" />
            <path d={curve(MIDDLE)} stroke="#ffd700" strokeDasharray="3 3" />
          </g>
          <g stroke="#ffd700" strokeWidth="3">
            {MARKS.map(([x, y]) => (
              <path key={`${x}-${y}`} d={`M${x - 6} ${y + 5}h2.500L${x + 3} ${y - 4.5}h3M${x - 5} ${y - 4}h3l6 8h2.500`} />
            ))}
          </g>
          <g shapeRendering="crispEdges">
            <path d={candles.upWick} stroke="#00bfff" />
            <path d={candles.upBody} stroke="#00bfff" strokeWidth="3" />
            <path d={candles.downWick} stroke="#ff1493" />
            <path d={candles.downBody} stroke="#ff1493" strokeWidth="3" />
          </g>
          <path d="M1813.500 136V742" stroke="#da70d6" strokeDasharray="15 4 3 4" />
          <path d="M1813.500 726.500h25l4 6-4 6h-25z" fill="#da70d6" stroke="#fff" />
          <path d="M1616 135h9l-4.500 5z" fill="#ffd700" />
        </svg>
        <NewsPanel />
        <TradeAssistant />
        <svg width="8" height="4" viewBox="0 0 8 4" className="absolute top-[6px] left-[3px]">
          <path d="M0 0h8L4 4z" fill="#fff" />
        </svg>
        <div className="absolute top-[3px] right-[4px] flex items-center gap-px text-[9px] leading-[13px] text-white">
          <span>Trade Assistant MT4</span>
          <svg width="12" height="12" viewBox="0 0 12 12" fill="none" stroke="#fff">
            <circle cx="6" cy="6" r="5.500" />
            <path d="M3.500 9q2.500-3 5 0M3.500 4l1.500.8M8.500 4L7 4.800" />
          </svg>
        </div>
        <p className="absolute top-[221px] right-[116px] font-['DejaVu_Sans',sans-serif] text-[21px] leading-6 text-[#00ff00]">
          &lt;--00:52
        </p>
        <div className="absolute bottom-0 left-[423px] flex font-['Liberation_Sans',sans-serif] text-[13px] leading-[18px] whitespace-nowrap">
          <span className="w-[230px] text-[#ffff00]">Balance : $ 9798.46</span>
          <span className="w-[661px] text-[#1e90ff]">Equity : $ 9798.46</span>
          <span className="text-[#708090]">Acc Profit : $ 0.00</span>
        </div>
        <span className="absolute right-[22px] bottom-[4px] text-[9px] leading-[11px] text-black">15:30</span>
      </div>
      <div className={axisText + 'relative w-[45px]'}>
        <ul className="flex h-[calc(100%+2px)] flex-col justify-between pt-[5px]">
          {PRICES.map((price) => (
            <Tick key={price}>{price}</Tick>
          ))}
        </ul>
        <span className="absolute top-[210px] left-[1px] h-[11px] w-[41px] bg-[#ffd700] pl-[4px] text-black">143.472</span>
        <span className="absolute top-[215px] left-[1px] h-[11px] w-[41px] bg-white pl-[4px] text-black">143.463</span>
      </div>
    </div>
  );
}

function TdiPane() {
  return (
    <div className="flex h-[102px] shrink-0">
      <div className="relative min-w-0 flex-1 border border-white">
        <svg viewBox="15 745 1847 100" preserveAspectRatio="none" className="absolute inset-0 h-full w-full" fill="none">
          <path d="M15 778.500H1862M15 795.500H1862M15 812.500H1862" stroke="#fff" strokeDasharray="3 3" />
          <path d="M1615 757l3 3 3 4v17l-6-6zM1615 776l6 7v18l-6-7z" fill="#696969" />
          <path d={curve(TDI_FAST)} stroke="#fff" strokeWidth="2" strokeLinejoin="round" />
          <path d={curve(TDI_SLOW)} stroke="#1e90ff" strokeWidth="2" strokeLinejoin="round" />
        </svg>
        <p className="absolute top-[2px] left-[4px] text-[9px] leading-[13px] whitespace-nowrap text-white">
          tdi ob1 M1 TDI of Rsx of JMA (12,0,0) 84.8534 61.9749 39.0964 24.7059 30.5967
        </p>
        <p className="absolute top-[10px] right-[9px] font-['DejaVu_Sans',sans-serif] text-xs leading-4 font-bold text-[#00ff00]">
          M1 UP TREND
        </p>
      </div>
      <div className={axisText + 'relative w-[45px]'}>
        <span className="absolute top-[2px] left-[3px]">102.7167</span>
        <span className="absolute top-[29px] left-[3px]">68</span>
        <span className="absolute top-[46px] left-[3px]">50</span>
        <span className="absolute top-[63px] left-[3px]">32</span>
        <span className="absolute top-[89px] left-[3px]">-2.3774</span>
        <span className="absolute top-[92px] left-[3px]">0.00</span>
      </div>
    </div>
  );
}

function MacdPane() {
  return (
    <div className="flex h-[131px] shrink-0">
      <div className="relative min-w-0 flex-1 border border-white">
        <svg viewBox="15 848 1847 129" preserveAspectRatio="none" className="absolute inset-0 h-full w-full" fill="none">
          <g stroke="#ffd700" strokeDasharray="17 7" shapeRendering="crispEdges">
            <path d={curve(MACD_UPPER)} />
            <path d={curve(MACD_LOWER)} />
          </g>
          {MACD.map(({ up, data }) => (
            <path
              key={data}
              d={curve(parse(data))}
              stroke={up ? '#00ff00' : '#ff0000'}
              strokeWidth="6"
              strokeLinecap="round"
              strokeLinejoin="round"
            />
          ))}
          <path d="M15 928.500H1862" stroke="#ba55d3" />
          <path d="M15 972l5 5h-5z" fill="#ffd700" />
        </svg>
        <p className="absolute top-[3px] left-[4px] text-[9px] leading-[13px] text-white">
          pa nonlag bbmacd (5.00,10.00,1.00) -0.0098 -0.0423 -0.0181
        </p>
      </div>
      <div className={axisText + 'relative w-[45px]'}>
        <span className="absolute top-[2px] left-[3px]">0.1218</span>
        <span className="absolute top-[76px] left-[3px]">0.00</span>
        <span className="absolute top-[118px] left-[3px]">-0.0743</span>
      </div>
    </div>
  );
}

function ChartWindow() {
  return (
    <main className="flex min-h-0 flex-1 border-t border-l border-[#a0a0a0] bg-white pr-[2px] pb-px">
      <section className="flex min-w-0 flex-1 flex-col rounded-t-md border-2 border-t-[#333] border-r-[#111] border-b-[#111] border-l-[#333] bg-[#b9d1ea] shadow-[inset_1px_1px_0_#fff,inset_-1px_-1px_0_#19cfe6]">
        <div className="flex h-[30px] shrink-0 items-center rounded-t-md border-t border-l border-white bg-linear-to-b from-[#99b4d1] to-[#b9d1ea] pr-[8px] pl-[9px]">
          <svg width="15" height="14" viewBox="0 0 15 14" fill="#e6f0ff" stroke="#5588dd" className="mt-[5px] mr-[4px]">
            <rect x=".5" y=".5" width="10" height="9" />
            <rect x="3.500" y="4.500" width="11" height="9" />
            <path d="M1 2.500h9M4 6.500h10M5 10l2-1 1 2 2-3 2 3" fill="none" />
          </svg>
          <h2 className="flex-1 pt-[5px] font-['Roboto',sans-serif] text-xs leading-4">USDJPY,M1</h2>
          <div className="mt-[5px] flex gap-[2px]">
            <button aria-label="Minimize chart" className="flex h-[18px] w-8 items-center justify-center rounded-sm border border-[#6a86a8] bg-linear-to-b from-[#c6d8ec] from-50% to-[#a3bcd8] to-50%">
              <span className="mt-[2px] h-[5px] w-[11px] rounded-xs border border-[#555e6e] bg-white" />
            </button>
            <button aria-label="Maximize chart" className="flex h-[18px] w-8 items-center justify-center rounded-sm border border-[#6a86a8] bg-linear-to-b from-[#c6d8ec] from-50% to-[#a3bcd8] to-50%">
              <span className="h-[9px] w-[11px] rounded-xs border border-[#555e6e] bg-white p-[2px]">
                <span className="block h-[3px] border border-[#555e6e]" />
              </span>
            </button>
            <button aria-label="Close chart" className="flex h-[18px] w-8 items-center justify-center rounded-sm border border-[#4a1520] bg-linear-to-b from-[#e0988d] from-50% to-[#bb4430] to-50% text-white">
              <FaXmark size={12} stroke="#555e6e" strokeWidth={30} />
            </button>
          </div>
        </div>
        <div className="mr-[6px] mb-[6px] ml-[7px] flex min-h-0 flex-1 flex-col gap-px border-t-2 border-r-2 border-b border-l-2 border-t-[#888] border-r-white border-b-white border-l-[#777] bg-black pt-[2px] pl-[2px]">
          <PricePane />
          <TdiPane />
          <MacdPane />
          <ol className={axisText + 'flex h-[20px] shrink-0 overflow-hidden'}>
            {TIMES.map((time) => (
              <li key={time} className="w-16 shrink-0 whitespace-nowrap">
                <div className="ml-px h-[2px] w-px bg-white" />
                15 Sep {time}
              </li>
            ))}
          </ol>
        </div>
      </section>
    </main>
  );
}

/* ---------- bottom bars ---------- */

function StatusBar() {
  const cell = 'flex h-[19px] items-center border-l border-[#a0a0a0] pl-[5px] ';
  return (
    <footer className="flex h-[23px] shrink-0 items-center border-t border-white text-[11px] leading-4 whitespace-nowrap">
      <span className="flex-1 pl-[2px]">For Help, press F1</span>
      <span className={cell + 'w-[116px]'}>Default</span>
      <span className={cell + 'w-[102px]'}>2022.09.15 12:14</span>
      <span className={cell + 'w-[71px]'}>O: 143.481</span>
      <span className={cell + 'w-[71px]'}>H: 143.497</span>
      <span className={cell + 'w-[68px]'}>L: 143.478</span>
      <span className={cell + 'w-[70px]'}>C: 143.480</span>
      <span className={cell + 'w-[66px]'}>V: 84</span>
      <span className={cell + 'w-[130px] gap-[5px]'}>
        <svg width="23" height="13" viewBox="0 0 23 13">
          {[0, 1, 2, 3, 4, 5, 6, 7].map((i) => (
            <g key={i}>
              <rect x={i * 3} y="0" width="2" height={9 - i} fill="#6b7a12" />
              <rect x={i * 3} y={10 - i} width="2" height={3 + i} fill="#0d3f5c" />
            </g>
          ))}
        </svg>
        11808/44 kb
      </span>
    </footer>
  );
}

function TaskItem({ label, active, running, children }: { label: string; active?: boolean; running?: boolean; children: ReactNode }) {
  return (
    <button aria-label={label} className="relative flex w-11 items-center justify-center">
      <span
        className={
          active
            ? 'flex h-[38px] w-[38px] items-center justify-center rounded-sm border border-black/5 bg-white/70'
            : 'flex h-[38px] w-[38px] items-center justify-center'
        }
      >
        <svg width="24" height="24" viewBox="0 0 24 24">
          {children}
        </svg>
      </span>
      {running && <span className="absolute bottom-[5px] h-[3px] w-[6px] rounded-full bg-[#8a8583]" />}
      {active && <span className="absolute bottom-[5px] h-[3px] w-4 rounded-full bg-[#1f7a8c]" />}
    </button>
  );
}

function Taskbar() {
  return (
    <footer className="grid h-12 shrink-0 grid-cols-3 border-t border-[#d4d4d4] bg-[linear-gradient(to_right,#dadada_20%,#f0f0f0_26%,#f8ebe6_50%,#f3f0ee_68%,#ebebeb_79%,#d9d9d9_82%)] text-[#1b1b1b]">
      <div className="flex items-center gap-[10px] pl-[22px]">
        <svg width="20" height="20" viewBox="0 0 20 20">
          <defs>
            <linearGradient id="moon" x1="0" y1="0" x2="0" y2="1">
              <stop offset="0" stopColor="#ffd24a" />
              <stop offset="1" stopColor="#f59a00" />
            </linearGradient>
          </defs>
          <path d="M14 0c8 6 8 20-5 20-5 0-8-2-9-5 8 2 16-3 14-15z" fill="url(#moon)" />
        </svg>
        <div className="text-[11px] leading-4">
          <div>54°F</div>
          <div className="text-[#5f5f5f]">Clear</div>
        </div>
      </div>
      <div className="flex justify-center">
        <TaskItem label="Start">
          <path d="M0 0h11.500v11.500H0zM12.500 0H24v11.500H12.500zM0 12.500h11.500V24H0zM12.500 12.500H24V24H12.500z" fill="#1493e2" />
        </TaskItem>
        <TaskItem label="Search">
          <circle cx="13.500" cy="9.500" r="8.500" fill="#fff4f0" stroke="#2b2b2b" strokeWidth="2" />
          <path d="M8 16L2 22.500" stroke="#2b2b2b" strokeWidth="2.500" />
        </TaskItem>
        <TaskItem label="Task view">
          <rect x="6" y="0" width="18" height="16" fill="#f0efee" />
          <rect x="0" y="6" width="18" height="17" fill="#2f2f2f" />
          <path d="M6 6h12v10H6z" fill="#a9a9a9" />
        </TaskItem>
        <TaskItem label="Chat">
          <path d="M1 12A11 11 0 1112 23.500L1.500 23l1.800-4A11 11 0 011 12z" fill="#5b5fc7" />
          <rect x="5" y="7.500" width="10" height="9" rx="1.500" fill="#fff" />
          <path d="M16 11l3.500-2v7L16 14z" fill="#fff" />
        </TaskItem>
        <TaskItem label="Opera" running>
          <ellipse cx="12" cy="12" rx="11.500" ry="11.500" fill="#e0202f" />
          <ellipse cx="12" cy="12" rx="5" ry="8.500" fill="#fbeeea" />
        </TaskItem>
        <TaskItem label="File explorer">
          <path d="M0 3q0-2 2-2h6l3 3h11q2 0 2 2v15q0 2-2 2H2q-2 0-2-2z" fill="#e0a21a" />
          <path d="M0 8q0-1 1-1h7l3-2h12q1 0 1 1v15q0 2-2 2H2q-2 0-2-2z" fill="#ffd04f" />
          <path d="M4 23v-4q0-3 3-3h10q3 0 3 3v4z" fill="#1677cf" />
        </TaskItem>
        <TaskItem label="FTMO" active>
          <ellipse cx="10.500" cy="12" rx="10" ry="11.500" fill="#25b15b" />
          <ellipse cx="10" cy="12" rx="3.500" ry="8" fill="#fff" />
          <path d="M11 7v10h7V7z" fill="#25b15b" />
          <path d="M18 4l2 5v6l-2 5z" fill="#fff" />
          <path d="M12 9.500h12M12 14.500h12M15.500 5v14" stroke="#25b15b" strokeWidth="2" />
          <path d="M13 12h11" stroke="#fff" strokeWidth="1.500" />
        </TaskItem>
        <TaskItem label="Notepad" running>
          <rect x="3" y="2" width="18" height="20" fill="#42b9dc" />
          <path d="M3 21h18v3H3z" fill="#8a4a22" />
          <path d="M3 20h18v2H3z" fill="#fff" />
          <path d="M6 8h12M6 12h12M6 16h12" stroke="#175f80" strokeWidth="2" />
          <path d="M5.500 0v3M9.500 0v3M13.500 0v3M17.500 0v3" stroke="#175f80" strokeWidth="2" />
        </TaskItem>
      </div>
      <div className="flex items-center justify-end gap-[8px] pr-4">
        <ChevronUp size={16} strokeWidth={2} />
        <svg width="18" height="18" viewBox="0 0 18 18" fill="none" stroke="#222" strokeWidth="1.500">
          <path d="M2 8a7 7 0 0113-3M15 1v4h-4M2 16v-4h4M2 12a7 7 0 005 4" />
          <circle cx="13" cy="13" r="4" fill="#ff9800" stroke="none" />
        </svg>
        <Wifi size={17} strokeWidth={1.8} />
        <Volume2 size={16} strokeWidth={1.7} />
        <svg width="17" height="14" viewBox="0 0 17 14" fill="none" stroke="#111" strokeWidth="1.300">
          <path d="M5 3h8.500q1 0 1 1v6q0 1-1 1H4q-1 0-1-1V8M16 5.500v3" />
          <path d="M7 5h5v4.500H6V7z" fill="#111" />
          <path d="M1.500 0v3M4.500 0v3M.5 3h5v2l-1.500 1.500H2L.5 5z" fill="#111" />
        </svg>
        <div className="ml-2 text-right text-[11px] leading-4">
          <div>6:54 AM</div>
          <div>9/15/2022</div>
        </div>
      </div>
    </footer>
  );
}

export default function App() {
  return (
    <div className="flex h-screen flex-col overflow-hidden bg-[#f0f0f0] font-['Open_Sans','Noto_Sans',sans-serif] text-[11px] text-black">
      <TitleBar />
      <MenuBar />
      <div className="flex shrink-0 justify-between">
        <div>
          <MainToolbar />
          <LineToolbar />
        </div>
        <div className="flex h-7 items-center gap-[12px] pr-[6px]">
          <button aria-label="Search" className="-scale-x-100 text-[#2b62cc]">
            <Search size={14} strokeWidth={2.5} />
          </button>
          <button aria-label="Notifications" className="relative h-5 w-[23px]">
            <svg width="13" height="13" viewBox="0 0 13 13" className="absolute bottom-0 left-0">
              <path d="M1 5a6 4.500 0 1112 0 6 4.500 0 01-8 4l-1 3-1-3A5 5 0 011 5z" fill="#e8e8ee" stroke="#aaa" />
            </svg>
            <span className="absolute -top-px right-0 h-4 w-4 rounded-full bg-[#df3420] text-center text-[11px] leading-4 text-white">
              1
            </span>
          </button>
        </div>
      </div>
      <ChartWindow />
      <StatusBar />
      <Taskbar />
    </div>
  );
}
